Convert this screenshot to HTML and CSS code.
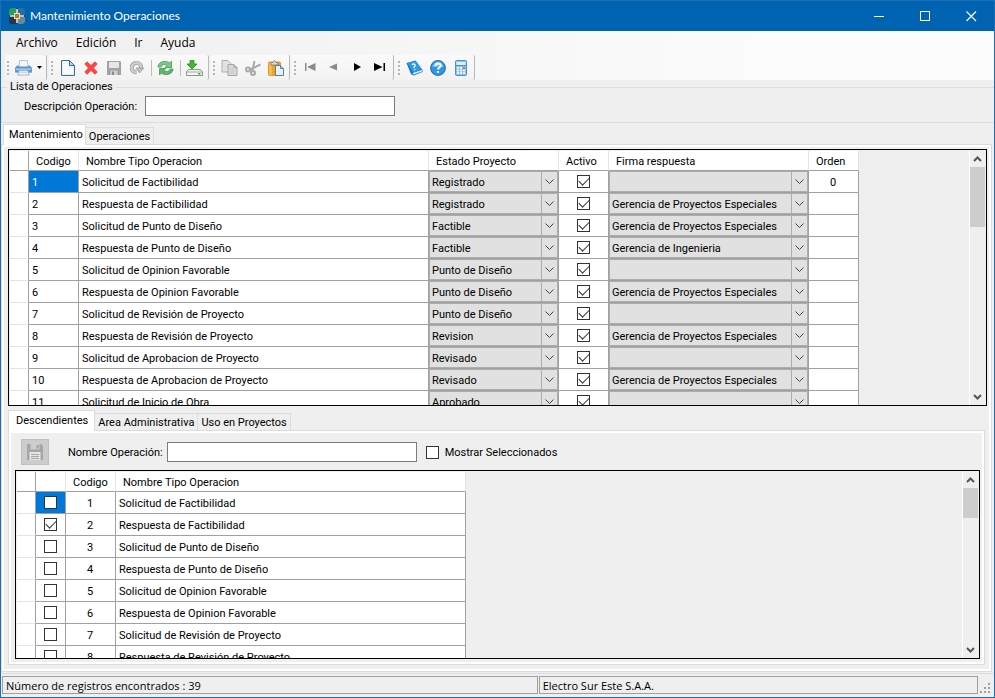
FILE: index.html
```
<!DOCTYPE html>
<html lang="es">
<head>
  <meta charset="UTF-8">
  <meta name="viewport" content="width=device-width, initial-scale=1">
  <title>Mantenimiento Operaciones</title>
  <link rel="stylesheet" href="styles.css">
</head>
<body>

<header class="titlebar">
  <svg class="app-icon" width="16" height="16" viewBox="0 0 16 16">
    <rect width="16" height="16" rx="3" fill="#14405e"/>
    <path d="M3 0h4v7H0V3a3 3 0 0 1 3-3z" fill="#24a05c"/>
    <path d="M9 0h4a3 3 0 0 1 3 3v4H9z" fill="#2a6f9c"/>
    <path d="M0 9h7v7H3a3 3 0 0 1-3-3z" fill="#2b3540"/>
    <path d="M9 9h7v4a3 3 0 0 1-3 3H9z" fill="#6f8698"/>
    <path d="M8 1v14M1 8h14" stroke="#e9eef0" stroke-width="1.6"/>
    <rect x="5" y="5" width="6" height="6" fill="#e8e0c8"/>
    <rect x="6" y="6" width="4" height="4" fill="#b07a1c"/>
  </svg>
  <h1>Mantenimiento Operaciones</h1>
  <button class="win-btn" aria-label="Minimizar">
    <svg width="11" height="11"><path d="M0 5.5h10" stroke="#fff"/></svg>
  </button>
  <button class="win-btn" aria-label="Maximizar">
    <svg width="11" height="11"><rect x=".5" y=".5" width="9" height="9" fill="none" stroke="#fff"/></svg>
  </button>
  <button class="win-btn" aria-label="Cerrar">
    <svg width="11" height="11"><path d="M.5.5l9.5 9.5M10 .5L.5 10" stroke="#fff" stroke-width="1.1"/></svg>
  </button>
</header>

<div class="strip">
  <nav class="menubar">
    <a href="#">Archivo</a>
    <a href="#">Edición</a>
    <a href="#">Ir</a>
    <a href="#">Ayuda</a>
  </nav>

  <div class="toolbars">
    <div class="toolbar">
      <button class="tool" aria-label="Imprimir">
        <svg width="17" height="16" viewBox="0 0 18 16">
          <path d="M5 0h8l1 7H4z" fill="#f2f7fb" stroke="#9db3c4" stroke-width=".8"/>
          <path d="M2 6h2v1h10V6h2l1.500 2v4.500H.5V8z" fill="#5d9fd6" stroke="#5b8dba" stroke-width=".8"/>
          <path d="M1 8.500h16V10H1z" fill="#a8d0ef"/>
          <path d="M4.500 10.500h9l1.500 5H3z" fill="#eef3f7" stroke="#8fa5b5" stroke-width=".8"/>
          <path d="M5 12.500h8" stroke="#b8cad8"/>
        </svg>
      </button>
      <button class="tool tool-drop" aria-label="Opciones de impresión">
        <svg width="5" height="3"><path d="M0 0h5L2.500 3z"/></svg>
      </button>
    </div>

    <div class="toolbar">
      <button class="tool" aria-label="Nuevo">
        <svg width="14" height="16" viewBox="0 0 14 16">
          <path d="M.5.500h8l5 5v10H.5z" fill="#e3f2fb" stroke="#3c6f97"/>
          <path d="M2 2h5v5l5 1v6H2z" fill="#f8fcff"/>
          <path d="M8.500.5v5h5z" fill="#b3d9f0" stroke="#3c6f97" stroke-linejoin="round"/>
        </svg>
      </button>
      <button class="tool" aria-label="Eliminar">
        <svg width="14" height="14" viewBox="0 0 14 14">
          <path d="M.8 3L3 .8l4 3.700L11 .800 13.200 3 9.500 7l3.700 4-2.200 2.200-4-3.700-4 3.700L.8 11l3.700-4z" fill="#f5484b" stroke="#e0383c" stroke-width=".8"/>
        </svg>
      </button>
      <button class="tool" aria-label="Guardar" disabled>
        <svg width="14" height="14" viewBox="0 0 14 14">
          <path d="M0 0h13l1 1v13H0z" fill="#a2a2a2"/>
          <path d="M2 1h10v6H2z" fill="#e6e6e6"/>
          <path d="M3.500 9.500h7V14h-7z" fill="#cfcfcf"/>
          <path d="M5 10.500h2V14H5z" fill="#8a8a8a"/>
        </svg>
      </button>
      <button class="tool" aria-label="Deshacer" disabled>
        <svg width="14" height="15" viewBox="0 0 14 15">
          <path d="M6.500 12.500A4.800 4.800 0 1 1 11 6v2" fill="none" stroke="#9a9a9a" stroke-width="4"/>
          <path d="M6.500 12.500A4.800 4.800 0 1 1 11 6v2" fill="none" stroke="#cecece" stroke-width="2.600"/>
          <path d="M6 8h8l-4.500 5z" fill="#c0c0c0" stroke="#9a9a9a" stroke-width=".8"/>
        </svg>
      </button>
      <span class="sep"></span>
      <button class="tool" aria-label="Actualizar">
        <svg width="17" height="16" viewBox="0 0 17 16">
          <path d="M1 7C1 3.500 4 1.500 8 1.500c2 0 3.500.5 4.500 1.500L14.500 1v6.500H8L10 5.500C8 4 5 4 4 7z" fill="#7cc982" stroke="#3f9a55" stroke-width=".8"/>
          <path d="M16 9c0 3.500-3 5.500-7 5.500-2 0-3.500-.5-4.500-1.500l-2 2V8.500H9L7 10.500c2 1.500 5 1.500 6-1.500z" fill="#5fb568" stroke="#3f9a55" stroke-width=".8"/>
        </svg>
      </button>
      <span class="sep"></span>
      <button class="tool" aria-label="Exportar">
        <svg width="17" height="16" viewBox="0 0 17 16">
          <path d="M2.500 9.500h12l2 2.500v3.500H.5V12z" fill="#f4f4f4" stroke="#888" stroke-width=".9"/>
          <path d="M1 12h15" stroke="#aaa"/>
          <path d="M12 13h2.500v1.500H12z" fill="#38b52e"/>
          <path d="M4 .5h4V4h3L6 9 1 4h3z" fill="#3fbc2c" stroke="#278a1e" stroke-width=".8"/>
        </svg>
      </button>
    </div>

    <div class="toolbar">
      <button class="tool" aria-label="Copiar" disabled>
        <svg width="17" height="16" viewBox="0 0 17 16">
          <path d="M1 .5h6l3 3V12H1z" fill="#e2e2e2" stroke="#b0b0b0"/>
          <path d="M7 4.500h6l3 3v8H7z" fill="#dadada" stroke="#a5a5a5"/>
          <path d="M9 9h5M9 11h5M9 13h5" stroke="#c8c8c8"/>
          <path d="M13 4.500v3h3" fill="none" stroke="#a5a5a5"/>
        </svg>
      </button>
      <button class="tool" aria-label="Cortar" disabled>
        <svg width="16" height="16" viewBox="0 0 16 16" fill="none" stroke="#a8a8a8" stroke-width="2">
          <path d="M9.500 1L7.500 10M15.500 4.500L5.500 9.500"/>
          <circle cx="3" cy="9.500" r="2"/>
          <circle cx="8" cy="13" r="2"/>
        </svg>
      </button>
      <button class="tool" aria-label="Pegar">
        <svg width="16" height="16" viewBox="0 0 16 16">
          <rect x=".5" y="2" width="12" height="13.500" rx="1" fill="#f6a11f" stroke="#dd8d1c" stroke-width=".8"/>
          <path d="M1.500 3h2v12h-2z" fill="#fcc65e"/>
          <path d="M3 2.500h2L6.500.500 8 2.500h2V5H3z" fill="#d9d9d9" stroke="#777" stroke-width=".8"/>
          <path d="M7.500 5.500h5l3 3v7h-8z" fill="#e6f3fb" stroke="#41779f" stroke-width=".9"/>
          <path d="M12.500 5.500v3h3" fill="#b6d9ee" stroke="#41779f" stroke-width=".9"/>
        </svg>
      </button>
    </div>

    <div class="toolbar">
      <button class="tool tool-nav" aria-label="Primero" disabled>
        <svg width="11" height="8"><path d="M0 0h1.500v8H0zM10.500 0v8L2 4z" fill="#8b8b8b"/></svg>
      </button>
      <button class="tool tool-nav" aria-label="Anterior" disabled>
        <svg width="9" height="8"><path d="M8 .5v7L0 4z" fill="#8b8b8b"/></svg>
      </button>
      <button class="tool tool-nav" aria-label="Siguiente">
        <svg width="8" height="8"><path d="M1 0v8l7-4z"/></svg>
      </button>
      <button class="tool tool-nav" aria-label="Último">
        <svg width="11" height="8"><path d="M9.500 0H11v8H9.500zM0 0v8l8.500-4z"/></svg>
      </button>
    </div>

    <div class="toolbar">
      <button class="tool" aria-label="Manual">
        <svg width="17" height="16" viewBox="0 0 17 16">
          <path d="M.5 3L9.500.500l7 9.500v2L7.500 15.500 5 14z" fill="#1272c4"/>
          <path d="M6.500 13l9.500-3v1.500l-8.500 3z" fill="#eef5fa"/>
          <path d="M1.500 3.200L9.500 1l6 8.500L7 12.500z" fill="#2f9be8"/>
          <path d="M6 4.700c1.500-1.500 3.500-.5 3 1C8.700 6.500 8 6.800 8.300 8M8.700 9.300l.3.900" fill="none" stroke="#fff" stroke-width="1.300"/>
        </svg>
      </button>
      <button class="tool" aria-label="Ayuda">
        <svg width="16" height="16" viewBox="0 0 16 16">
          <circle cx="8" cy="8" r="7.300" fill="#3197e4" stroke="#1f74bf" stroke-width="1.200"/>
          <path d="M2.500 7a5.500 5.500 0 0 1 11 0z" fill="#6bbdf2"/>
          <path d="M5.500 6c0-3.300 5.200-3.200 5.200-.3C10.700 7.500 8 7.500 8 9.500M8 11v2" fill="none" stroke="#fff" stroke-width="1.900"/>
        </svg>
      </button>
      <button class="tool" aria-label="Calculadora">
        <svg width="12" height="16" viewBox="0 0 12 16">
          <rect x=".5" y=".5" width="11" height="15" rx="1" fill="#8cc4ee" stroke="#4a90cc"/>
          <path d="M1.500 2h9v3h-9z" fill="#d9effc"/>
          <path d="M1 5.500h10" stroke="#4a90cc"/>
          <path d="M2 8h8M2 10.500h8M2 13h8" stroke="#fff" stroke-width="1.500" stroke-dasharray="2 1"/>
          <path d="M8 7.200h2v1.600H8z" fill="#e2402c"/>
        </svg>
      </button>
    </div>
  </div>
</div>

<fieldset class="filter">
  <legend>Lista de Operaciones</legend>
  <label for="descripcion">Descripción Operación:</label>
  <input type="text" id="descripcion">
</fieldset>

<main class="tabs tabs-main">
  <div class="tab-list" role="tablist">
    <button class="tab active" role="tab" aria-selected="true">Mantenimiento</button>
    <button class="tab" role="tab" aria-selected="false">Operaciones</button>
  </div>
  <div class="tab-panel">

    <div class="grid grid-top">
      <div class="grid-view">
        <table class="operaciones">
          <colgroup>
            <col class="c-head"><col class="c-code"><col class="c-name"><col class="c-estado">
            <col class="c-code"><col class="c-firma"><col class="c-code">
          </colgroup>
          <thead>
            <tr>
              <th></th>
              <th>Codigo</th>
              <th>Nombre Tipo Operacion</th>
              <th>Estado Proyecto</th>
              <th>Activo</th>
              <th>Firma respuesta</th>
              <th>Orden</th>
            </tr>
          </thead>
          <tbody id="operacionesBody"></tbody>
        </table>
      </div>
      <div class="scrollbar">
        <svg width="9" height="6"><path d="M1 5l3.500-3.500L8 5"/></svg>
        <span class="thumb"></span>
        <svg width="9" height="6"><path d="M1 1l3.500 3.500L8 1"/></svg>
      </div>
    </div>

    <section class="tabs tabs-detail">
      <div class="tab-list" role="tablist">
        <button class="tab active" role="tab" aria-selected="true">Descendientes</button>
        <button class="tab" role="tab" aria-selected="false">Area Administrativa</button>
        <button class="tab" role="tab" aria-selected="false">Uso en Proyectos</button>
      </div>
      <div class="tab-panel">
        <div class="detail-bar">
          <button class="save-btn" aria-label="Guardar descendientes" disabled>
            <svg width="16" height="16" viewBox="0 0 16 16">
              <path d="M0 0h14.500L16 1.500V16H0z" fill="#a6a6a6"/>
              <path d="M3.500 0h9v5.500h-9z" fill="#cdcdcd"/>
              <path d="M9.500 1h2v3.500h-2z" fill="#a0a0a0"/>
              <path d="M2.500 8h11v8h-11z" fill="#e6e6e6"/>
              <path d="M4 10.500h8M4 12.500h8M4 14.500h8" stroke="#a5a5a5"/>
            </svg>
          </button>
          <label for="nombre">Nombre Operación:</label>
          <input type="text" id="nombre">
          <input type="checkbox" id="seleccionados">
          <label for="seleccionados">Mostrar Seleccionados</label>
        </div>

        <div class="grid grid-detail">
          <div class="grid-view">
            <table class="descendientes">
              <colgroup>
                <col class="c-head"><col class="c-check"><col class="c-code"><col class="c-name">
              </colgroup>
              <thead>
                <tr>
                  <th></th>
                  <th></th>
                  <th>Codigo</th>
                  <th>Nombre Tipo Operacion</th>
                </tr>
              </thead>
              <tbody id="descendientesBody"></tbody>
            </table>
          </div>
          <div class="scrollbar">
            <svg width="9" height="6"><path d="M1 5l3.500-3.500L8 5"/></svg>
            <span class="thumb"></span>
            <svg width="9" height="6"><path d="M1 1l3.500 3.500L8 1"/></svg>
          </div>
        </div>
      </div>
    </section>

  </div>
</main>

<footer class="statusbar">
  <span class="status">Número de registros encontrados : 39</span>
  <span class="status status-company">Electro Sur Este S.A.A.</span>
  <svg class="size-grip" width="11" height="11" fill="#a0a0a0">
    <path d="M8 0h2v2H8zM4 4h2v2H4zM8 4h2v2H8zM0 8h2v2H0zM4 8h2v2H4zM8 8h2v2H8z"/>
  </svg>
</footer>

<script src="script.js"></script>
</body>
</html>
```
FILE: styles.css
```
* {
  box-sizing: border-box;
}
body {
  margin: 0;
  height: 100vh;
  display: flex;
  flex-direction: column;
  overflow: hidden;
  background: #efefef;
  border: 1px solid #1a6fb5;
  border-top: none;
  font-family: Roboto, "Liberation Sans", sans-serif;
  font-size: 11px;
  line-height: 14px;
  color: #000;
}
button, input, select {
  font: inherit;
  color: inherit;
  margin: 0;
}
button {
  border: none;
  background: none;
  padding: 0;
}
svg {
  display: block;
  flex: none;
}

/* title bar */
.titlebar {
  display: flex;
  align-items: center;
  flex: none;
  height: 31px;
  padding-left: 8px;
  background: #0063b1;
  border-top: 1px solid #1a6fb5;
  color: #fff;
}
.titlebar h1 {
  flex: 1;
  margin: 0 0 0 5px;
  font-family: Lato, "Open Sans", sans-serif;
  font-size: 12px;
  line-height: 16px;
  font-weight: normal;
}
.win-btn {
  display: flex;
  align-items: center;
  justify-content: center;
  width: 46px;
  height: 30px;
}

/* menu and tool bars */
.strip {
  flex: none;
  background: linear-gradient(90deg, #efefef, #fcfcfc 80%);
}
.menubar {
  display: flex;
  gap: 18px;
  height: 24px;
  padding-left: 15px;
  align-items: center;
  font-family: "Open Sans", sans-serif;
  font-size: 12px;
}
.menubar a {
  color: #000;
  text-decoration: none;
}
.toolbars {
  display: flex;
  gap: 2px;
  padding-left: 4px;
  height: 25px;
}
.toolbar {
  display: flex;
  align-items: center;
  padding-right: 2px;
  border-right: 1px solid #b8b8b8;
  border-radius: 2px;
  background: linear-gradient(#fafafa, #f2f2f2);
}
.toolbar::before {
  content: "";
  width: 2px;
  height: 14px;
  margin: 0 3px 0 2px;
  background: repeating-linear-gradient(#b5b5b5 0 2px, transparent 2px 4px);
}
.tool {
  display: flex;
  align-items: center;
  justify-content: center;
  width: 23px;
  height: 22px;
}
.tool-drop {
  width: 9px;
}
.tool-nav {
  padding-bottom: 2px;
}
.sep {
  width: 6px;
  height: 16px;
  background: linear-gradient(#bdbdbd, #bdbdbd) center / 1px 100% no-repeat;
}

/* search box */
.filter {
  flex: none;
  display: flex;
  align-items: center;
  margin: 0;
  padding: 2px 0 6px 22px;
  border: 1px solid #dcdcdc;
  border-right: none;
}
.filter legend {
  margin-left: -17px;
  padding: 0 3px;
}
.filter label {
  width: 121px;
  padding-top: 2px;
}
input[type="text"] {
  width: 250px;
  height: 20px;
  padding: 0 3px;
  background: #fff;
  border: 1px solid #7a7a7a;
  border-radius: 0;
}
input[type="checkbox"] {
  appearance: none;
  display: block;
  width: 13px;
  height: 13px;
  background: #fff;
  border: 1px solid #333;
}
input[type="checkbox"]:checked::after {
  content: "";
  display: block;
  width: 9px;
  height: 5px;
  margin: 2px 0 0 1px;
  border: solid #333;
  border-width: 0 0 1px 1px;
  transform: rotate(-45deg);
}
td input[type="checkbox"]:checked::after {
  margin-top: 1px;
}

/* tabs */
.tabs {
  flex: 1;
  min-height: 0;
  display: flex;
  flex-direction: column;
}
.tabs-main {
  padding: 1px 2px 1px 0;
}
.tab-list {
  display: flex;
  align-items: flex-end;
  height: 20px;
  padding-left: 2px;
}
.tab {
  height: 17px;
  padding: 1px 3px 0;
  border: 1px solid #dcdcdc;
  border-bottom: none;
  border-left: none;
  white-space: nowrap;
}
.tab.active {
  position: relative;
  height: 21px;
  margin-bottom: -1px;
  padding: 0 6px 1px 7px;
  background: #fff;
  border-left: 1px solid #dcdcdc;
}
.tab-panel {
  flex: 1;
  min-height: 0;
  display: flex;
  flex-direction: column;
  border: 1px solid #dcdcdc;
  box-shadow: inset 0 0 0 2px #fff;
}
.tabs-main > .tab-panel {
  padding: 4px 4px 6px 6px;
}
.tabs-main > .tab-list .tab.active {
  padding: 0 2px 1px 5px;
}
.tabs-detail {
  padding: 4px 2px 0 0;
}
.tabs-detail > .tab-list {
  padding-left: 0;
}
.tabs-detail > .tab-panel {
  padding: 8px 4px 5px 6px;
}

/* data grids */
.grid {
  display: flex;
  min-height: 0;
  border: 1px solid #000;
}
.grid-top {
  flex: 0 1 257px;
}
.grid-detail {
  flex: 1;
}
.grid-view {
  flex: 1;
  min-width: 0;
  overflow: hidden;
  padding: 1px 0 0 1px;
}
table {
  table-layout: fixed;
  border-collapse: separate;
  border-spacing: 0;
  background: #fff;
}
.operaciones {
  width: 849px;
}
.descendientes {
  width: 449px;
}
.c-head { width: 19px; }
.c-check { width: 30px; }
.c-code { width: 50px; }
.c-name { width: 350px; }
.c-estado { width: 130px; }
.c-firma { width: 200px; }
th {
  height: 20px;
  padding: 2px 0 0 7px;
  border-right: 1px solid #e3e3e3;
  border-bottom: 1px solid #a0a0a0;
  font-weight: normal;
  text-align: left;
  white-space: nowrap;
}
td {
  height: 22px;
  padding: 2px 0 0 3px;
  border-right: 1px solid #a0a0a0;
  border-bottom: 1px solid #a0a0a0;
  white-space: nowrap;
}
th:first-child,
td:first-child {
  border-right-color: #a0a0a0;
}
td:first-child {
  border-bottom-color: #e3e3e3;
}
td.num {
  text-align: center;
  padding: 2px 1px 0 0;
}
td.check {
  padding: 0;
}
td.check input {
  margin: 0 auto;
}
td.selected {
  background: #0078d7;
  color: #fff;
}
td.combo {
  padding: 0;
}
.select {
  position: relative;
  display: block;
  height: 21px;
}
.select select {
  appearance: none;
  display: block;
  width: 100%;
  height: 100%;
  padding: 2px 20px 0 2px;
  background: linear-gradient(#adadad, #adadad) right 15px top / 1px 100% no-repeat #e1e1e1;
  border: 1px solid #adadad;
  border-radius: 0;
}
.select svg {
  position: absolute;
  top: 8px;
  right: 4px;
  pointer-events: none;
}
.select path,
.scrollbar path {
  fill: none;
  stroke: #444;
}

/* scroll bars */
.scrollbar {
  display: flex;
  flex-direction: column;
  align-items: center;
  width: 17px;
  padding: 6px 1px 5px 0;
  border-left: 1px solid #fff;
}
.scrollbar path {
  stroke: #555;
  stroke-width: 2;
}
.thumb {
  width: 100%;
  height: 60px;
  margin: 5px 0 auto;
  background: #cdcdcd;
}
.grid-detail .thumb {
  height: 30px;
}

/* detail toolbar */
.detail-bar {
  flex: none;
  display: flex;
  align-items: center;
  height: 26px;
  margin-bottom: 5px;
  padding-left: 6px;
}
.save-btn {
  display: flex;
  align-items: center;
  justify-content: center;
  width: 28px;
  height: 26px;
  margin-right: 19px;
  background: #ccc;
  border: 1px solid #bfbfbf;
}
.detail-bar label {
  padding-top: 2px;
}
.detail-bar input[type="text"] {
  margin: 0 9px 0 4px;
}
.detail-bar input[type="checkbox"] {
  margin-right: 6px;
}

/* status bar */
.statusbar {
  flex: none;
  display: flex;
  gap: 1px;
  padding: 2px 3px 3px 1px;
  border-top: 1px solid #dcdcdc;
  font-family: "Open Sans", sans-serif;
}
.status {
  flex: 537;
  height: 18px;
  padding: 0 3px;
  border: 1px solid #a0a0a0;
  line-height: 18px;
}
.status-company {
  flex: 439;
}
.size-grip {
  align-self: flex-end;
  margin-left: 1px;
}
```
FILE: script.js
```
const operacionesBody = document.getElementById('operacionesBody');
const descendientesBody = document.getElementById('descendientesBody');

const ESPECIALES = 'Gerencia de Proyectos Especiales';
const INGENIERIA = 'Gerencia de Ingenieria';

const operaciones = [
  { nombre: 'Solicitud de Factibilidad', estado: 'Registrado', firma: '', orden: '0' },
  { nombre: 'Respuesta de Factibilidad', estado: 'Registrado', firma: ESPECIALES },
  { nombre: 'Solicitud de Punto de Diseño', estado: 'Factible', firma: ESPECIALES },
  { nombre: 'Respuesta de Punto de Diseño', estado: 'Factible', firma: INGENIERIA },
  { nombre: 'Solicitud de Opinion Favorable', estado: 'Punto de Diseño', firma: '' },
  { nombre: 'Respuesta de Opinion Favorable', estado: 'Punto de Diseño', firma: ESPECIALES },
  { nombre: 'Solicitud de Revisión de Proyecto', estado: 'Punto de Diseño', firma: '' },
  { nombre: 'Respuesta de Revisión de Proyecto', estado: 'Revision', firma: ESPECIALES },
  { nombre: 'Solicitud de Aprobacion de Proyecto', estado: 'Revisado', firma: '' },
  { nombre: 'Respuesta de Aprobacion de Proyecto', estado: 'Revisado', firma: ESPECIALES },
  { nombre: 'Solicitud de Inicio de Obra', estado: 'Aprobado', firma: '' }
];

function combo(value, label) {
  return `
    <span class="select">
      <select aria-label="${label}"><option>${value}</option></select>
      <svg width="9" height="6"><path d="M.5.5l4 4 4-4"/></svg>
    </span>`;
}

operaciones.forEach((op, i) => {
  const codigo = i + 1;
  operacionesBody.insertAdjacentHTML('beforeend', `
    <tr>
      <td></td>
      <td class="${i === 0 ? 'selected' : ''}">${codigo}</td>
      <td>${op.nombre}</td>
      <td class="combo">${combo(op.estado, 'Estado Proyecto ' + codigo)}</td>
      <td class="check"><input type="checkbox" aria-label="Activo ${codigo}" checked></td>
      <td class="combo">${combo(op.firma, 'Firma respuesta ' + codigo)}</td>
      <td class="num">${op.orden || ''}</td>
    </tr>`);
});

// only the second operation is a descendant of the selected one
operaciones.slice(0, 8).forEach((op, i) => {
  const codigo = i + 1;
  descendientesBody.insertAdjacentHTML('beforeend', `
    <tr>
      <td></td>
      <td class="check ${i === 0 ? 'selected' : ''}">
        <input type="checkbox" aria-label="Descendiente ${codigo}" ${codigo === 2 ? 'checked' : ''}>
      </td>
      <td class="num">${codigo}</td>
      <td>${op.nombre}</td>
    </tr>`);
});
```
